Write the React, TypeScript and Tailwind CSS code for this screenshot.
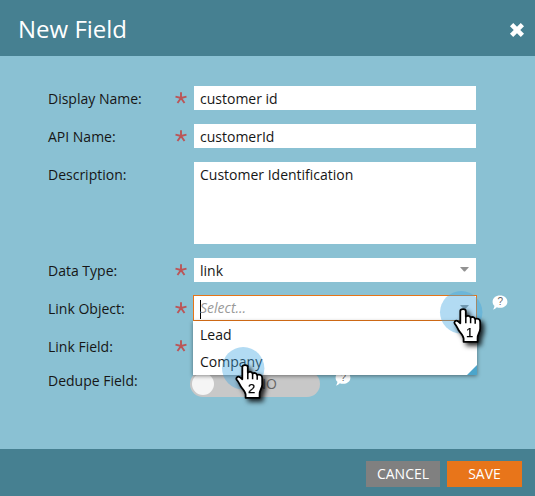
import type { ReactNode } from "react";

function Label({ text, required = false }: { text: string; required?: boolean }) {
  return (
    <div className="flex h-6 w-[146px] shrink-0 items-center justify-between pr-[7px]">
      <span className="pt-0.5 whitespace-nowrap">{text}</span>
      {required && (
        <svg width="12" height="12" viewBox="0 0 12 12" className="-mt-px shrink-0" stroke="#bb5557" strokeWidth="1.9">
          <path d="M6 6V0.3M6 6L0.5 4.6M6 6L11.5 4.6M6 6L2.5 11M6 6L9.5 11" fill="none" />
        </svg>
      )}
    </div>
  );
}

function Row({ label, required, children }: { label: string; required?: boolean; children?: ReactNode }) {
  return (
    <div className="flex items-start">
      <Label text={label} required={required} />
      {children}
    </div>
  );
}

function Arrow() {
  return (
    <svg width="9" height="5" viewBox="0 0 9 5" className="-mt-0.5 shrink-0">
      <path d="M0 0H9L5 4.5H4Z" fill="#929292" />
    </svg>
  );
}

function Help() {
  return (
    <svg width="16" height="16" viewBox="0 0 16 16" className="shrink-0">
      <path d="M8 .5C12.4.5 15.4 3.2 15.4 6.7S12.4 12.8 8 12.8C6.7 12.8 5.8 12.6 4.8 12.2C3.8 13.4 2.5 14.2.9 14.6C1.8 13.5 2.4 12.2 2.4 10.8C1.1 9.7.6 8.3.6 6.7C.6 3.2 3.6.5 8 .5Z" fill="#fff" />
      <text x="8.2" y="10.2" textAnchor="middle" fontSize="10" fill="#666" fontFamily="Liberation Sans, sans-serif">?</text>
    </svg>
  );
}

function Pointer({ n }: { n: number }) {
  return (
    <svg width="60" height="64" viewBox="0 0 60 64" className="overflow-visible">
      <defs>
        <filter id={`shade${n}`} x="-40%" y="-40%" width="200%" height="200%">
          <feDropShadow dx="3" dy="3" stdDeviation="2.5" floodColor="#000" floodOpacity="0.85" />
        </filter>
      </defs>
      <circle cx="22.2" cy="22.3" r="21.2" fill="#3fa5e0" fillOpacity="0.4" />
      <g transform="translate(15 18)" filter={`url(#shade${n})`}>
        <path
          d="M6.3 3C6.3 .4 11.8 .4 11.8 3V8.6C13 7.4 16 7.8 16.6 9.6C18 8.5 20.6 9 21.2 11C23.5 10 26.2 11.2 26.2 14V20.5C26.2 24.5 23.6 26 23.6 30V33.8H9.6V30.6C9.6 27.6 6.2 25 4.5 22C3 19.4 2.4 17.6 1 16.2C-.7 14.2 1.5 11.8 3.8 13.1L6.3 15.2Z"
          fill="#fff"
          stroke="#000"
          strokeWidth="1.8"
          strokeLinejoin="round"
        />
        <path d="M11.8 8V15.3M16.6 9.5V15.3M21.2 11V15.8" stroke="#000" strokeWidth="1.5" fill="none" />
        <text x="15.6" y="28.6" textAnchor="middle" fontSize="13" stroke="#000" strokeWidth=".25" fontFamily="Liberation Sans, sans-serif">{n}</text>
      </g>
    </svg>
  );
}

export default function App() {
  return (
    <div className="flex h-[496px] w-[535px] flex-col overflow-hidden bg-[#8ac1d3] font-['Open_Sans','Noto_Sans',sans-serif] text-sm text-[#161616]">
      <header className="flex h-14 shrink-0 items-center justify-between bg-[#468091] pr-[10px] pl-[18px] text-white">
        <h1 className="pt-0.5 text-2xl leading-8">New Field</h1>
        <svg width="16" height="16" viewBox="0 0 16 16" className="mt-1">
          <path d="M2.6 2.6L13.4 13.4M13.4 2.6L2.6 13.4" stroke="#fff" strokeWidth="4.6" />
        </svg>
      </header>

      <main className="flex grow flex-col gap-[14px] pt-[30px] pl-12">
        <Row label="Display Name:" required>
          <div className="flex h-6 w-[282px] items-center bg-white px-1.5 pt-0.5">customer id</div>
        </Row>
        <Row label="API Name:" required>
          <div className="flex h-6 w-[282px] items-center bg-white px-1.5 pt-0.5">customerId</div>
        </Row>
        <Row label="Description:">
          <div className="h-[82px] w-[282px] bg-white px-1.5 pt-[3px]">Customer Identification</div>
        </Row>
        <Row label="Data Type:" required>
          <div className="flex h-6 w-[282px] items-center justify-between bg-white pr-[7px] pl-1.5">
            <span className="pt-0.5">link</span>
            <Arrow />
          </div>
        </Row>
        <Row label="Link Object:" required>
          <div className="relative -mt-px -mb-px -ml-px h-[26px] w-[284px]">
            <div className="flex h-[26px] items-center justify-between border border-[#e67518] bg-white pr-[7px] pl-1.5">
              <span className="flex items-center text-[#999] italic">
                <span className="mt-0.5 -mr-px h-[19px] w-px bg-black" />
                Select...
              </span>
              <Arrow />
            </div>
            <div className="absolute top-[26px] left-0 z-10 h-[54px] w-[284px] bg-white shadow-[0_1px_4px_rgba(0,0,0,0.45)]">
              <div className="flex h-[27px] items-center px-[7px]">Lead</div>
              <div className="flex h-[27px] items-center px-[7px]">Company</div>
              <svg width="10" height="10" className="absolute right-0 bottom-0">
                <path d="M10 0V10H0Z" fill="#4ca5cb" />
              </svg>
            </div>
            <div className="absolute -top-[5px] left-[246px] z-20"><Pointer n={1} /></div>
            <div className="absolute top-[51px] left-[28px] z-20"><Pointer n={2} /></div>
          </div>
          <div className="-mt-px ml-[15px]"><Help /></div>
        </Row>
        <Row label="Link Field:" required />
        <div className="-mt-1">
          <Row label="Dedupe Field:">
            <div className="mt-[3px] -ml-1 flex h-[26px] w-[130px] items-center rounded-full bg-[#c8c8c8] pl-[1.5px]">
              <div className="h-[22px] w-[22px] rounded-full bg-[#f5f5f5]" />
              <span className="ml-[42px] text-[#666]">NO</span>
            </div>
            <div className="mt-[3px] ml-[15px]"><Help /></div>
          </Row>
        </div>
      </main>

      <footer className="flex h-[47px] shrink-0 items-start justify-end gap-[7px] bg-[#468091] pt-3 pr-[13px] text-white">
        <button className="h-[26px] w-[74px] bg-[#808080]">CANCEL</button>
        <button className="h-[26px] w-[75px] bg-[#e8751a]">SAVE</button>
      </footer>
    </div>
  );
}
